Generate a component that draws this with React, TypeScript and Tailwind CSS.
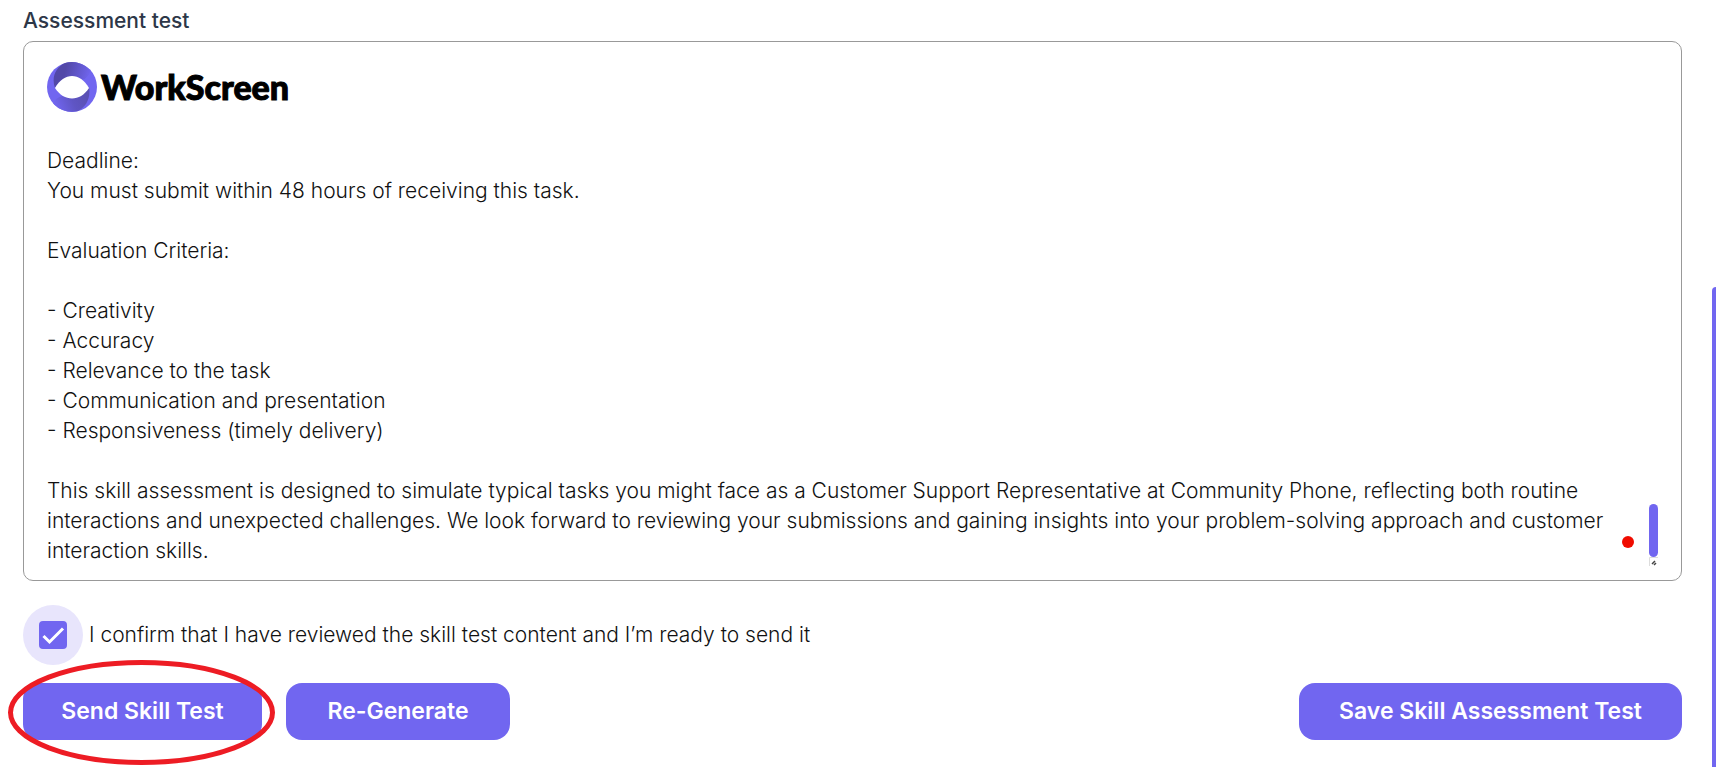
import { useState } from "react";

const assessment = `Deadline:
You must submit within 48 hours of receiving this task.

Evaluation Criteria:

- Creativity
- Accuracy
- Relevance to the task
- Communication and presentation
- Responsiveness (timely delivery)

This skill assessment is designed to simulate typical tasks you might face as a Customer Support Representative at Community Phone, reflecting both routine interactions and unexpected challenges. We look forward to reviewing your submissions and gaining insights into your problem-solving approach and customer interaction skills.`;

const buttonClass =
  "h-[57px] rounded-2xl bg-[#7166f0] text-[23px] font-semibold text-white cursor-pointer";

function Logo() {
  return (
    <div className="flex items-center gap-1">
      <svg className="size-[50px]" viewBox="0 0 50 50" aria-hidden="true">
        <defs>
          <linearGradient id="ringTop" x1="0" y1="0.3" x2="1" y2="0.5">
            <stop offset="0.3" stopColor="#5248a8" />
            <stop offset="1" stopColor="#7166f0" />
          </linearGradient>
          <linearGradient id="ringBottom" x1="1" y1="0.3" x2="0" y2="0.6">
            <stop offset="0.1" stopColor="#5a50b4" />
            <stop offset="0.5" stopColor="#5f55c4" />
            <stop offset="1" stopColor="#7166f0" />
          </linearGradient>
        </defs>
        <circle cx="25" cy="25" r="25" fill="#7166f0" />
        <path
          d="M8 26C4 15 9 5 18 1A25 25 0 0 1 44 9C41 15 37 19 34 17C23 12 14 16 8 26Z"
          fill="url(#ringTop)"
        />
        <path
          d="M42 25C44 36 39 45 31 49A25 25 0 0 1 6 41C9 36 13 34 17 34C27 38 36 35 42 25Z"
          fill="url(#ringBottom)"
        />
        <path d="M8 26C17 10 33 10 42 26C33 40 17 40 8 26Z" fill="white" />
      </svg>
      <span className="font-['Lato',sans-serif] text-[34px] leading-[52px] font-black text-black [-webkit-text-stroke:1px_black]">
        WorkScreen
      </span>
    </div>
  );
}

export default function App() {
  const [text, setText] = useState(assessment);
  const [confirmed, setConfirmed] = useState(true);

  return (
    <main className="relative min-h-screen overflow-hidden bg-white pt-1.5 pr-[34px] pl-[23px] font-['Inter',sans-serif] text-[21px] font-light text-[#111]">
      <label
        htmlFor="assessment"
        className="block leading-[30px] font-medium text-[#2d3748]"
      >
        Assessment test
      </label>

      {/* Editor */}
      <div className="relative mt-[5px] rounded-[10px] border border-[#999] px-[23px] pt-[19px] pb-3.5">
        <Logo />
        <textarea
          id="assessment"
          rows={14}
          value={text}
          onChange={(e) => setText(e.target.value)}
          className="mt-[33px] block w-full resize-none overflow-hidden pr-11 leading-[30px] outline-none"
        />
        <span className="absolute right-[47px] bottom-8 size-3 rounded-full bg-[#f00c00]" />
        <span className="absolute right-[23px] bottom-[23px] h-[53px] w-[9px] rounded-full bg-[#7166f0]" />
        <svg
          className="absolute right-[23px] bottom-3.5 size-[9px]"
          viewBox="0 0 9 9"
          aria-hidden="true"
        >
          <path d="M0.5 9V0.5H9" fill="none" stroke="#ddd" />
          <path d="M3 7L6 4M5 8L7 6" stroke="#444" strokeWidth="1.5" />
        </svg>
      </div>

      {/* Confirmation */}
      <label className="mt-6 flex w-fit cursor-pointer items-center gap-1.5">
        <span className="relative grid size-[60px] place-items-center rounded-full bg-[#e8e5fc]">
          <input
            type="checkbox"
            checked={confirmed}
            onChange={(e) => setConfirmed(e.target.checked)}
            className="peer size-7 appearance-none rounded-[4px] border-2 border-[#7166f0] checked:bg-[#7166f0]"
          />
          <svg
            className="pointer-events-none absolute hidden size-7 peer-checked:block"
            viewBox="0 0 28 28"
            fill="none"
            aria-hidden="true"
          >
            <path d="M4.5 15L10.5 21L24 7.5" stroke="white" strokeWidth="3" />
          </svg>
        </span>
        I confirm that I have reviewed the skill test content and I’m ready to
        send it
      </label>

      {/* Actions */}
      <div className="mt-[18px] flex justify-between">
        <div className="flex gap-6">
          <div className="relative">
            <button type="button" className={`${buttonClass} w-[239px]`}>
              Send Skill Test
            </button>
            <svg
              className="pointer-events-none absolute -top-[23px] -left-[15px] h-[105px] w-[267px]"
              viewBox="0 0 267 105"
              fill="none"
              aria-hidden="true"
            >
              <ellipse
                cx="133.5"
                cy="52.5"
                rx="131"
                ry="50"
                stroke="#ed1c24"
                strokeWidth="5"
              />
            </svg>
          </div>
          <button type="button" className={`${buttonClass} w-56`}>
            Re-Generate
          </button>
        </div>
        <button type="button" className={`${buttonClass} w-[383px]`}>
          Save Skill Assessment Test
        </button>
      </div>

      {/* Page scrollbar thumb */}
      <span className="absolute top-[287px] right-0 bottom-0 w-1 rounded-tl bg-[#7166f0]" />
    </main>
  );
}
